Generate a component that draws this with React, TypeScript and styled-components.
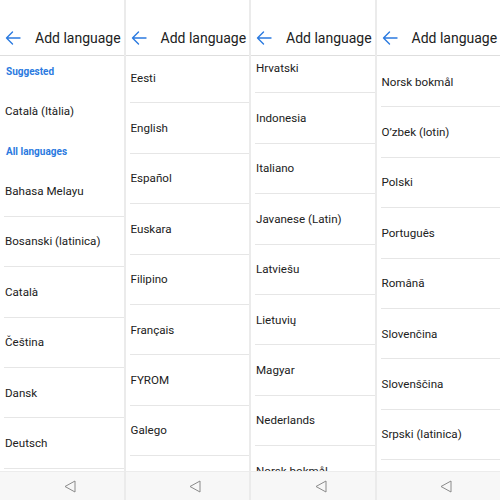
import React, { FC } from 'react';
import styled, { createGlobalStyle } from 'styled-components';

const ACCENT = '#2b7ae0';
const TEXT = '#212121';
const LINE = '#e6e6e6';
const ROW_HEIGHT = 50.4;

type Entry =
  | { kind: 'label', text: string }
  | { kind: 'item', text: string, divider?: boolean };

type ScreenData = {
  offset: number,
  entries: Array<Entry>,
};

const item = (text: string, divider = true): Entry => ({ kind: 'item', text, divider });
const label = (text: string): Entry => ({ kind: 'label', text });

const SCREENS: Array<ScreenData> = [
  {
    offset: 0,
    entries: [
      label('Suggested'),
      item('Català (Itàlia)', false),
      label('All languages'),
      item('Bahasa Melayu'),
      item('Bosanski (latinica)'),
      item('Català'),
      item('Čeština'),
      item('Dansk'),
      item('Deutsch'),
    ],
  },
  {
    offset: -3,
    entries: ['Eesti', 'English', 'Español', 'Euskara', 'Filipino', 'Français', 'FYROM', 'Galego']
      .map((t) => item(t)),
  },
  {
    offset: -13,
    entries: ['Hrvatski', 'Indonesia', 'Italiano', 'Javanese (Latin)', 'Latviešu', 'Lietuvių', 'Magyar',
      'Nederlands', 'Norsk bokmål'].map((t) => item(t)),
  },
  {
    offset: 1,
    entries: ['Norsk bokmål', 'O’zbek (lotin)', 'Polski', 'Português', 'Română', 'Slovenčina', 'Slovenščina',
      'Srpski (latinica)'].map((t) => item(t)),
  },
];

const GlobalStyle = createGlobalStyle`
  html, body {
    margin: 0;
    padding: 0;
    background: #ffffff;
  }

  body {
    font-family: Roboto, "Noto Sans", "Liberation Sans", sans-serif;
    -webkit-font-smoothing: antialiased;
  }
`;

const Strip = styled.div`
  display: grid;
  grid-template-columns: repeat(4, 1fr);
  column-gap: 2px;
  width: 500px;
  height: 500px;
  background: #ebebeb;
  overflow: hidden;
`;

const Phone = styled.div`
  display: flex;
  flex-direction: column;
  height: 500px;
  background: #ffffff;
  overflow: hidden;
`;

const Header = styled.div`
  display: flex;
  align-items: center;
  flex: 0 0 auto;
  height: 35px;
  padding-top: 20px;
  border-bottom: 1px solid #dedede;
  background: #ffffff;
  position: relative;
  z-index: 1;
`;

const BackButton = styled.div`
  display: flex;
  align-items: center;
  justify-content: center;
  width: 16px;
  height: 16px;
  margin: 0 14px 0 5px;
`;

const Title = styled.div`
  font-size: 14px;
  color: ${TEXT};
  white-space: nowrap;
`;

const ListViewport = styled.div`
  flex: 1 1 auto;
  overflow: hidden;
`;

const ListBody = styled.div<{ $offset: number }>`
  display: flex;
  flex-direction: column;
  margin-top: ${(p) => p.$offset}px;
`;

const SectionLabel = styled.div`
  display: flex;
  align-items: center;
  height: 30px;
  padding-left: 6px;
  font-size: 10px;
  font-weight: 700;
  color: ${ACCENT};
`;

const Row = styled.div<{ $divider: boolean }>`
  display: flex;
  align-items: center;
  flex: 0 0 auto;
  height: ${ROW_HEIGHT}px;
  margin-left: 4px;
  padding-left: 1px;
  box-sizing: border-box;
  border-bottom: 1px solid ${(p) => (p.$divider ? LINE : 'transparent')};
  font-size: 11.6px;
  color: ${TEXT};
  white-space: nowrap;
`;

const NavBar = styled.div`
  display: flex;
  align-items: center;
  justify-content: center;
  flex: 0 0 auto;
  height: 28px;
  padding-left: 16px;
  background: #f7f7f7;
  border-top: 1px solid #ececec;
`;

const BackArrow: FC = () => (
  <svg width="16" height="14" viewBox="0 0 16 14" fill="none">
    <path d="M15 7H1.5M7.5 1L1.5 7l6 6" stroke={ACCENT} strokeWidth="1.4" strokeLinecap="round"
          strokeLinejoin="round"/>
  </svg>
);

const NavBack: FC = () => (
  <svg width="12" height="13" viewBox="0 0 12 13" fill="none">
    <path d="M11 1L1 6.5L11 12Z" stroke="#8a8a8a" strokeWidth="1" strokeLinejoin="round"/>
  </svg>
);

const Screen: FC<ScreenData> = (props) => {
  return (
    <Phone>
      <Header>
        <BackButton><BackArrow/></BackButton>
        <Title>Add language</Title>
      </Header>
      <ListViewport>
        <ListBody $offset={props.offset}>
          {props.entries.map((e, i) => {
            if (e.kind === 'label') {
              return <SectionLabel key={i}>{e.text}</SectionLabel>;
            }
            return <Row key={i} $divider={e.divider !== false}>{e.text}</Row>;
          })}
        </ListBody>
      </ListViewport>
      <NavBar><NavBack/></NavBar>
    </Phone>
  );
};

const App: FC = () => {
  return (
    <>
      <GlobalStyle/>
      <Strip>
        {SCREENS.map((s, i) => <Screen key={i} offset={s.offset} entries={s.entries}/>)}
      </Strip>
    </>
  );
};

export default App;
